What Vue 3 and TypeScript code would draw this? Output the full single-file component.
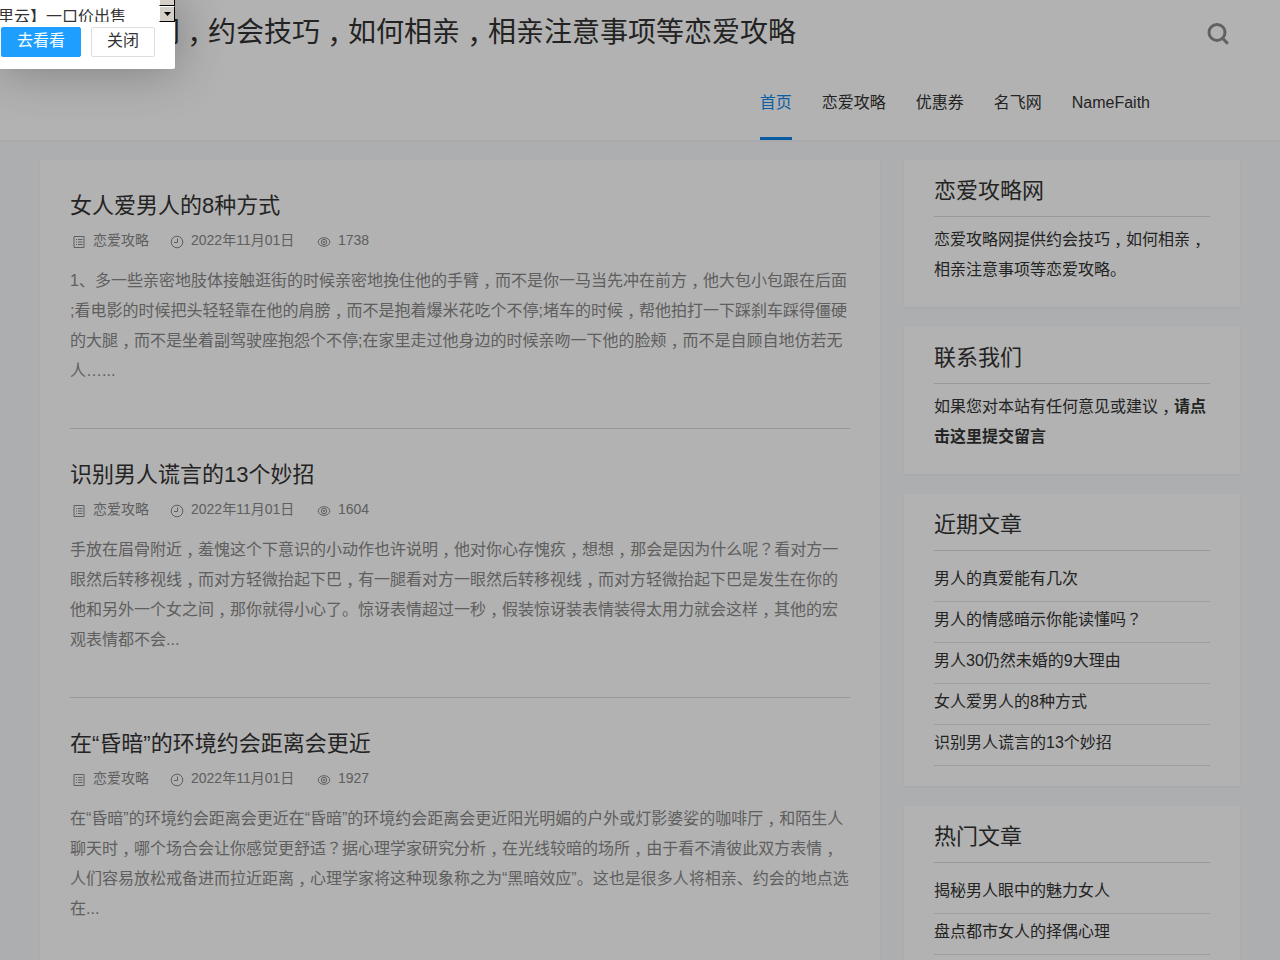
<script setup lang="ts">
interface Article {
  title: string
  date: string
  views: number
  lines: string[]
}

const siteTitle = '恋爱攻略网，约会技巧，如何相亲，相亲注意事项等恋爱攻略'
const nav: string[] = ['首页', '恋爱攻略', '优惠券', '名飞网', 'NameFaith']

const articles: Article[] = [
  {
    title: '女人爱男人的8种方式',
    date: '2022年11月01日',
    views: 1738,
    lines: [
      '1、多一些亲密地肢体接触逛街的时候亲密地挽住他的手臂，而不是你一马当先冲在前方，他大包小包跟在后面',
      ';看电影的时候把头轻轻靠在他的肩膀，而不是抱着爆米花吃个不停;堵车的时候，帮他拍打一下踩刹车踩得僵硬',
      '的大腿，而不是坐着副驾驶座抱怨个不停;在家里走过他身边的时候亲吻一下他的脸颊，而不是自顾自地仿若无',
      '人…...',
    ],
  },
  {
    title: '识别男人谎言的13个妙招',
    date: '2022年11月01日',
    views: 1604,
    lines: [
      '手放在眉骨附近，羞愧这个下意识的小动作也许说明，他对你心存愧疚，想想，那会是因为什么呢？看对方一',
      '眼然后转移视线，而对方轻微抬起下巴，有一腿看对方一眼然后转移视线，而对方轻微抬起下巴是发生在你的',
      '他和另外一个女之间，那你就得小心了。惊讶表情超过一秒，假装惊讶装表情装得太用力就会这样，其他的宏',
      '观表情都不会...',
    ],
  },
  {
    title: '在“昏暗”的环境约会距离会更近',
    date: '2022年11月01日',
    views: 1927,
    lines: [
      '在“昏暗”的环境约会距离会更近在“昏暗”的环境约会距离会更近阳光明媚的户外或灯影婆娑的咖啡厅，和陌生人',
      '聊天时，哪个场合会让你感觉更舒适？据心理学家研究分析，在光线较暗的场所，由于看不清彼此双方表情，',
      '人们容易放松戒备进而拉近距离，心理学家将这种现象称之为“黑暗效应”。这也是很多人将相亲、约会的地点选',
      '在...',
    ],
  },
]

const recent: string[] = [
  '男人的真爱能有几次',
  '男人的情感暗示你能读懂吗？',
  '男人30仍然未婚的9大理由',
  '女人爱男人的8种方式',
  '识别男人谎言的13个妙招',
]
const popular: string[] = ['揭秘男人眼中的魅力女人', '盘点都市女人的择偶心理']

// Commas and question marks are set apart so they can sit in the middle of their full-width cell.
const parts = (s: string): string[] => s.split(/([，？])/).filter(Boolean)
const mark = (t: string) => ({ comma: t === '，', question: t === '？' })
</script>

<template>
  <div class="page">
    <header class="header">
      <div class="brand">
        <h1><span v-for="(t, i) in parts(siteTitle)" :key="i" :class="mark(t)">{{ t }}</span></h1>
        <svg class="search" viewBox="0 0 24 24" width="24" height="24">
          <circle cx="11" cy="10.4" r="8" />
          <path d="M16.6 16.2l5.2 5.6" />
        </svg>
      </div>
      <nav class="nav">
        <a v-for="(n, i) in nav" :key="n" :class="{ active: i === 0 }">{{ n }}</a>
      </nav>
    </header>

    <div class="columns">
      <main class="card list">
        <article v-for="a in articles" :key="a.title">
          <h2>{{ a.title }}</h2>
          <div class="meta">
            <span class="cat">
              <svg viewBox="0 0 14 14" width="14" height="14">
                <path d="M2 1.5h10v11H2zM4 4.5h1M6 4.5h4.5M4 7h1M6 7h4.5M4 9.5h1M6 9.5h4.5" />
              </svg>恋爱攻略</span>
            <span class="date">
              <svg viewBox="0 0 14 14" width="14" height="14">
                <circle cx="7" cy="7" r="5.8" /><path d="M7.5 3.5v4H4" />
              </svg>{{ a.date }}</span>
            <span class="views">
              <svg viewBox="0 0 14 14" width="14" height="14">
                <ellipse cx="7" cy="7" rx="5.8" ry="4.3" /><circle cx="7" cy="7" r="2.7" /><circle cx="7" cy="7" r=".8" />
              </svg>{{ a.views }}</span>
          </div>
          <p>
            <span v-for="(l, j) in a.lines" :key="j" class="line"><span v-for="(t, i) in parts(l)" :key="i" :class="mark(t)">{{ t }}</span></span>
          </p>
        </article>
      </main>

      <aside>
        <section class="card">
          <h3>恋爱攻略网</h3>
          <p class="note">
            <span class="line">恋爱攻略网提供约会技巧<span class="comma">，</span>如何相亲<span class="comma">，</span></span>
            <span class="line">相亲注意事项等恋爱攻略。</span>
          </p>
        </section>
        <section class="card">
          <h3>联系我们</h3>
          <p class="note">
            <span class="line">如果您对本站有任何意见或建议<span class="comma">，</span><b>请点</b></span>
            <span class="line"><b>击这里提交留言</b></span>
          </p>
        </section>
        <section class="card">
          <h3>近期文章</h3>
          <ul>
            <li v-for="r in recent" :key="r"><span v-for="(t, i) in parts(r)" :key="i" :class="mark(t)">{{ t }}</span></li>
          </ul>
        </section>
        <section class="card">
          <h3>热门文章</h3>
          <ul>
            <li v-for="r in popular" :key="r">{{ r }}</li>
          </ul>
        </section>
      </aside>
    </div>

    <div class="shade"></div>
    <div class="dialog">
      <div class="message">
        <div class="text">里云】一口价出售</div>
        <div class="scrollbar">
          <div class="track"></div>
          <div class="arrow"><svg viewBox="0 0 7 4" width="7" height="4"><path d="M0 0h7L3.5 4z" /></svg></div>
        </div>
      </div>
      <div class="buttons">
        <a class="primary">去看看</a>
        <a class="plain">关闭</a>
      </div>
    </div>
  </div>
</template>

<style>
body {
  margin: 0;
  overflow: hidden;
}
</style>

<style scoped>
.page {
  height: 960px;
  overflow: hidden;
  position: relative;
  background: #f6f9fb;
  color: #333;
  font: 16px/30px "Liberation Sans", "Noto Sans CJK SC", sans-serif;
}
h1, h2, h3, p, ul {
  margin: 0;
  padding: 0;
  font-weight: 400;
}
.comma,
.question {
  font-family: "Noto Sans CJK TC", sans-serif;
  line-height: 1;
}
.comma {
  vertical-align: -0.35em;
}
.line {
  display: block;
  height: 30px;
  white-space: nowrap;
}
.header {
  height: 140px;
  background: #fff;
  box-shadow: 0 1px 2px rgba(0, 0, 0, 0.05);
}
.brand {
  display: flex;
  justify-content: space-between;
  height: 65px;
  padding: 0 50px 0 40px;
}
h1 {
  height: 65px;
  font-size: 28px;
  line-height: 65px;
  white-space: nowrap;
}
.search {
  margin-top: 22px;
  fill: none;
  stroke: #8c8c8c;
  stroke-width: 3;
}
.nav {
  display: flex;
  justify-content: flex-end;
  gap: 30px;
  height: 75px;
  padding-right: 130px;
}
.nav a {
  box-sizing: border-box;
  height: 75px;
  line-height: 76px;
}
.nav .active {
  color: #1389ec;
  border-bottom: 3px solid #0c85e9;
}
.columns {
  display: flex;
  align-items: flex-start;
  gap: 24px;
  padding: 20px 40px 0;
}
.card {
  background: #fff;
  box-shadow: 0 1px 2px rgba(0, 0, 0, 0.05);
  padding: 0 30px;
}
.list {
  width: 780px;
}
article {
  box-sizing: border-box;
  height: 269px;
  padding-top: 30px;
  border-bottom: 1px solid #dadada;
}
h2 {
  font-size: 22px;
  line-height: 32px;
  height: 30px;
}
.meta {
  display: flex;
  height: 30px;
  margin: 5px 0 11px;
  font-size: 14px;
  color: #888;
}
.meta span {
  display: flex;
  white-space: nowrap;
}
.meta svg {
  margin: 10px 7px 0 0;
  fill: none;
  stroke: #888;
  stroke-width: 1;
}
.cat {
  padding-left: 2px;
  width: 98px;
}
.date {
  width: 147px;
}
article p {
  color: #888;
}
aside {
  display: flex;
  flex-direction: column;
  gap: 20px;
  width: 336px;
}
h3 {
  height: 56px;
  font-size: 22px;
  line-height: 62px;
  border-bottom: 1px solid #dadada;
}
.note {
  height: 60px;
  padding: 8px 0 22px;
}
ul {
  list-style: none;
  padding: 10px 0 20px;
}
li {
  height: 40px;
  line-height: 35px;
  border-bottom: 1px solid #e2e2e2;
}
.shade {
  position: absolute;
  inset: 0;
  background: rgba(0, 0, 0, 0.3);
}
.dialog {
  position: absolute;
  left: 0;
  top: 0;
  width: 175px;
  height: 69px;
  background: #fff;
  border-radius: 0 0 2px 0;
  box-shadow: 1px 1px 50px rgba(0, 0, 0, 0.3);
}
.message {
  display: flex;
  justify-content: space-between;
  height: 22px;
  overflow: hidden;
}
.text {
  margin-left: -2px;
  line-height: 33px;
  white-space: nowrap;
}
.scrollbar {
  width: 16px;
}
.track,
.arrow {
  box-sizing: border-box;
  background: #d4d0c8;
  border: 1px solid;
  border-color: #fff #000 #000 #fff;
}
.track {
  height: 6px;
  border-top: 0;
}
.arrow {
  display: flex;
  align-items: center;
  justify-content: center;
  height: 16px;
}
.buttons {
  display: flex;
  gap: 10px;
  margin: 5px 0 0 1px;
}
.buttons a {
  box-sizing: border-box;
  height: 30px;
  line-height: 25px;
  padding: 0 15px;
  border: 1px solid #dedede;
  border-radius: 2px;
}
.buttons .primary {
  color: #fff;
  background: #1e9fff;
  border-color: #1e9fff;
}
</style>
